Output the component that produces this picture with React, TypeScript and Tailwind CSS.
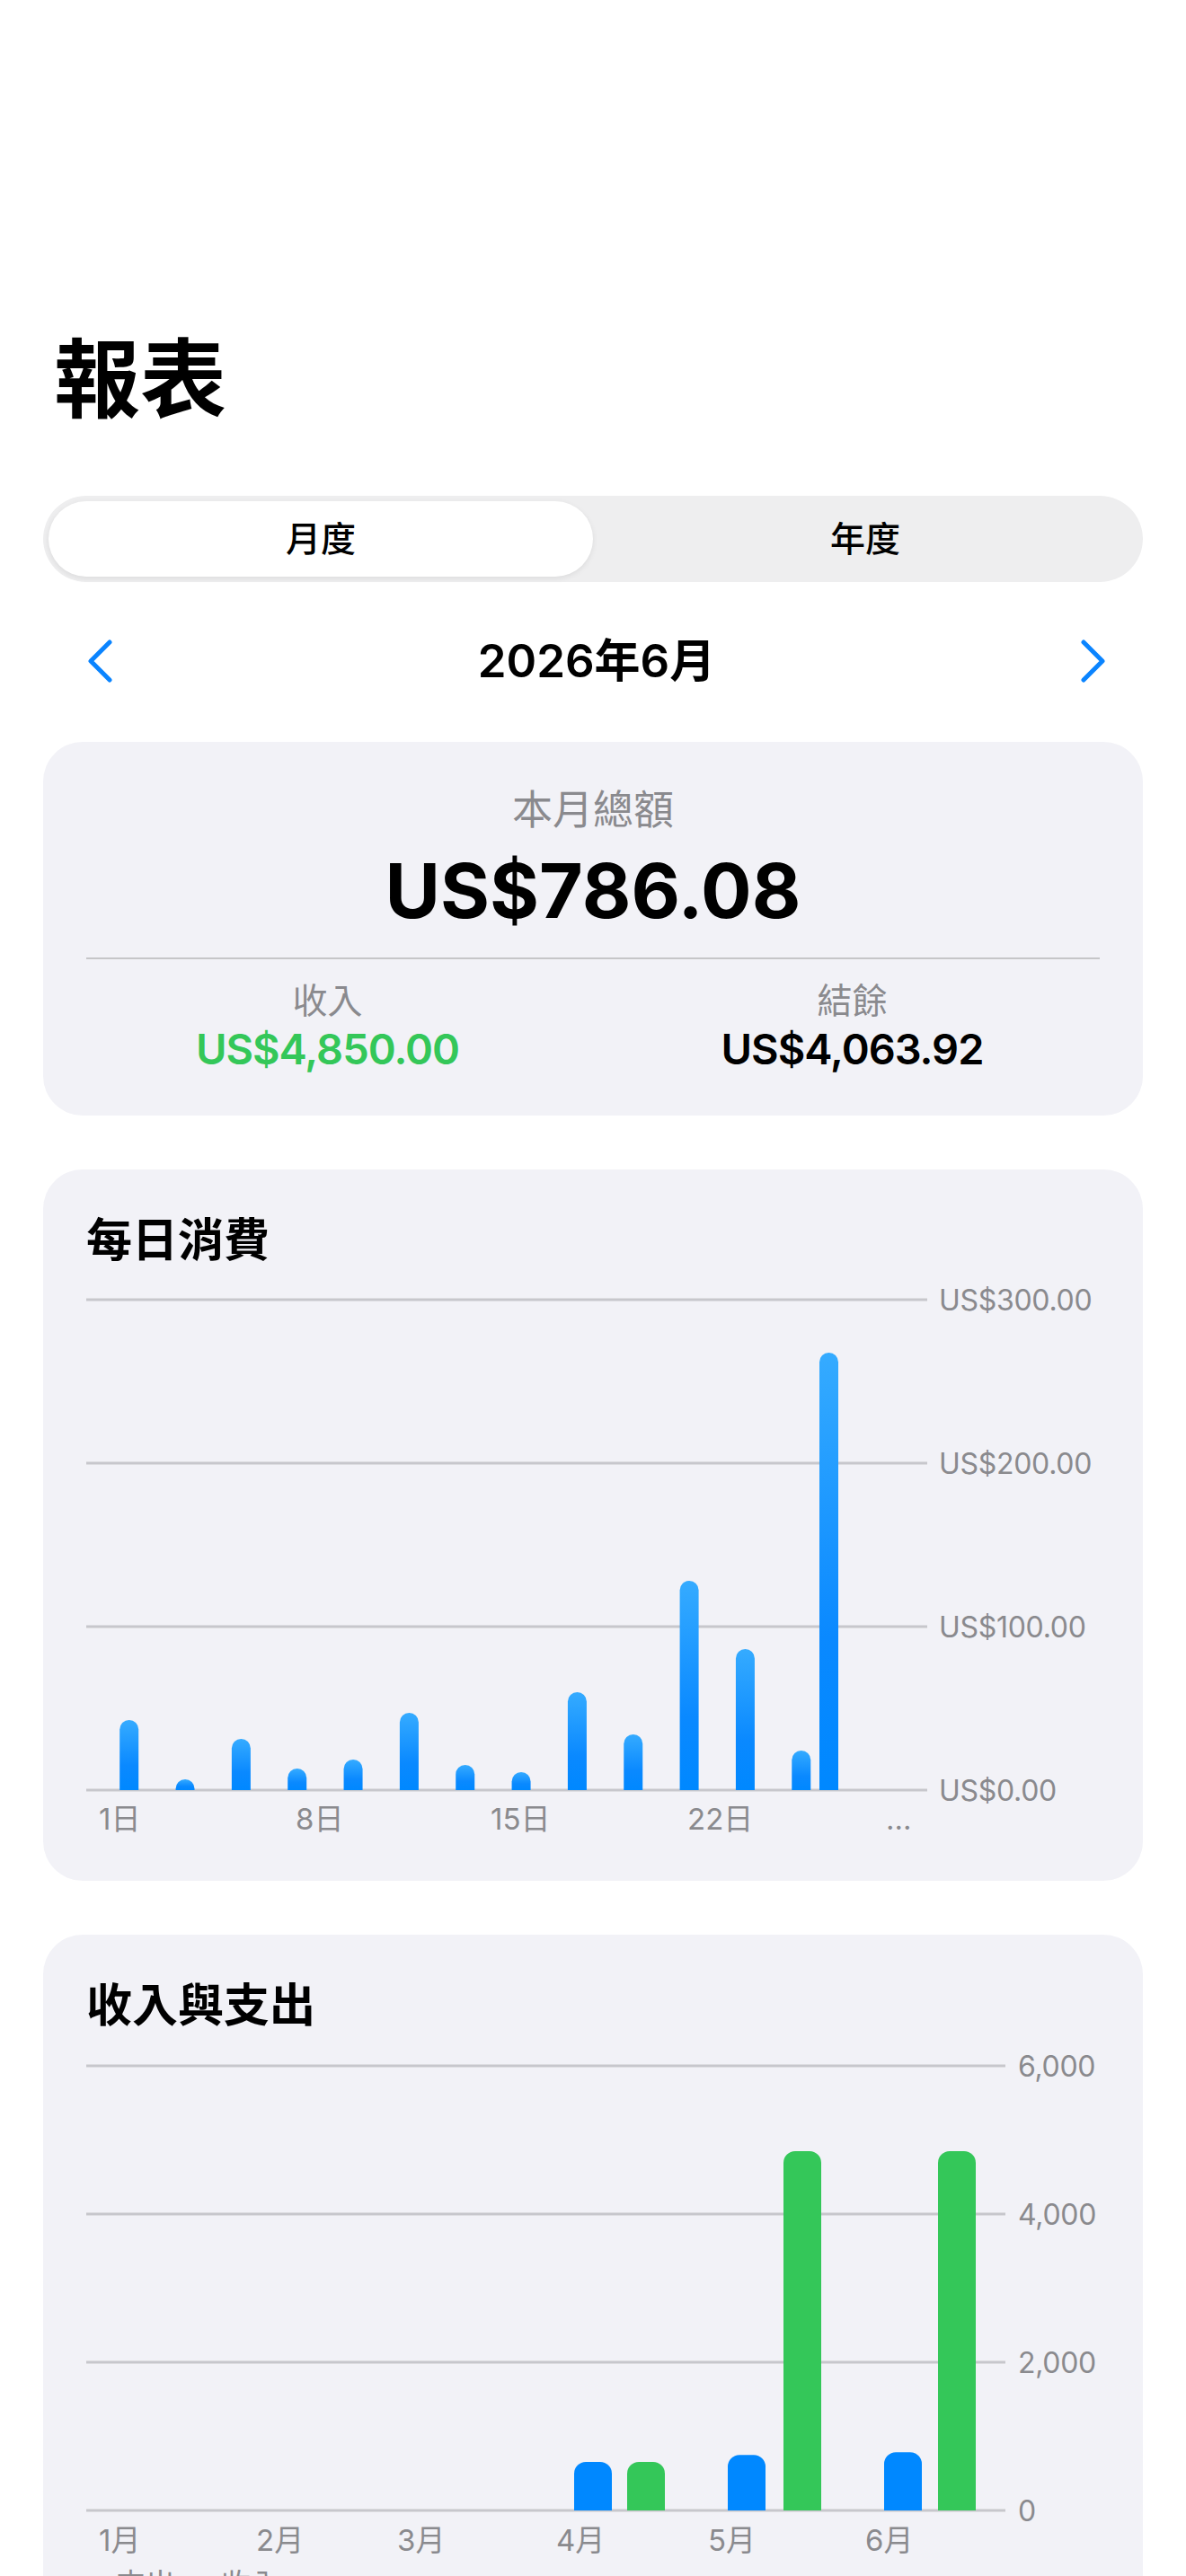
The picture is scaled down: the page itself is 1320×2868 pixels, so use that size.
import React from 'react';

const font = "font-['Inter','Noto_Sans_CJK_TC',sans-serif]";

// daily spend: bar centers (page x) and values in US$
const daily = [
  42.9, 6.6, 31.3, 13.2, 18.7, 47.3, 15.4, 11.0, 59.9, 34.1, 128.0, 86.3, 24.2,
].map((v, k) => ({ c: 143.7 + k * 62.34, v })).concat([{ c: 922.5, v: 267.6 }]);

// monthly income / expense, centers in page x
const monthly = [
  { c: 660, v: 655, color: '#0088ff' },
  { c: 719, v: 655, color: '#34c759' },
  { c: 831, v: 750, color: '#0088ff' },
  { c: 893, v: 4850, color: '#34c759' },
  { c: 1005, v: 786.08, color: '#0088ff' },
  { c: 1065, v: 4850, color: '#34c759' },
];

function topRounded(x: number, w: number, base: number, h: number, r: number) {
  const rr = Math.min(r, h, w / 2);
  const t = base - h;
  return `M${x},${base} V${t + rr} A${rr},${rr} 0 0 1 ${x + rr},${t} H${x + w - rr} A${rr},${rr} 0 0 1 ${x + w},${t + rr} V${base} Z`;
}

function Chevron({ dir }: { dir: 'left' | 'right' }) {
  return (
    <svg width="30" height="48" viewBox="0 0 30 48" fill="none">
      <path
        d={dir === 'left' ? 'M26 3 L5 24 L26 45' : 'M4 3 L25 24 L4 45'}
        stroke="#0a84ff"
        strokeWidth="5"
        strokeLinecap="round"
        strokeLinejoin="round"
      />
    </svg>
  );
}

function DailyChart() {
  const lines = [36, 218, 400, 582];
  const labels = ['US$300.00', 'US$200.00', 'US$100.00', 'US$0.00'];
  const base = 582;
  const perUnit = 1.82;
  const xs = [
    { x: 14, t: '1日' },
    { x: 233, t: '8日' },
    { x: 450, t: '15日' },
    { x: 669, t: '22日' },
    { x: 890, t: '…' },
  ];
  return (
    <svg width="1128" height="640" className="block overflow-visible">
      <defs>
        <linearGradient id="dg" x1="0" y1="0" x2="0" y2="1">
          <stop offset="0" stopColor="#35abff" />
          <stop offset="0.65" stopColor="#0a89ff" />
          <stop offset="1" stopColor="#0088ff" />
        </linearGradient>
      </defs>
      {lines.map((y, i) => (
        <g key={y}>
          <line x1="0" x2="936" y1={y} y2={y} stroke="#c7c7cc" strokeWidth="3" />
          <text x="949" y={y + 12} fontSize="32" letterSpacing="-0.3" fill="#8a8a8e">
            {labels[i]}
          </text>
        </g>
      ))}
      {daily.map((d, i) => (
        <path key={i} d={topRounded(d.c - 96 - 10.5, 21, base, d.v * perUnit, 10.5)} fill="url(#dg)" />
      ))}
      {xs.map((l) => (
        <text key={l.t} x={l.x} y="626" fontSize="33" fill="#8a8a8e">
          {l.t}
        </text>
      ))}
    </svg>
  );
}

function MonthlyChart() {
  const lines = [37, 202, 367, 532];
  const labels = ['6,000', '4,000', '2,000', '0'];
  const base = 532;
  const perUnit = 165 / 2000;
  const months = [
    { x: 14, t: '1月' },
    { x: 189, t: '2月' },
    { x: 346, t: '3月' },
    { x: 523, t: '4月' },
    { x: 692, t: '5月' },
    { x: 867, t: '6月' },
  ];
  return (
    <svg width="1128" height="594" className="block overflow-visible">
      {lines.map((y, i) => (
        <g key={y}>
          <line x1="0" x2="1023" y1={y} y2={y} stroke="#c7c7cc" strokeWidth="3" />
          <text x="1037" y={y + 12} fontSize="32" letterSpacing="-0.3" fill="#8a8a8e">
            {labels[i]}
          </text>
        </g>
      ))}
      {monthly.map((b, i) => (
        <path key={i} d={topRounded(b.c - 96 - 21, 42, base, b.v * perUnit, 13)} fill={b.color} />
      ))}
      {months.map((m) => (
        <text key={m.t} x={m.x} y="577" fontSize="33" fill="#8a8a8e">
          {m.t}
        </text>
      ))}
    </svg>
  );
}

export default function App() {
  return (
    <div className={`${font} min-h-[2868px] w-full bg-white text-black`}>
      {/* large title */}
      <h1 className="pt-[361px] px-[60px] text-[96px] leading-[122px] font-bold">報表</h1>

      {/* month / year segmented control */}
      <div className="mx-12 mt-[69px] h-[96px] rounded-full bg-[#eeeeef] p-[6px] flex">
        <div className="flex-1 rounded-full bg-white shadow-[0_2px_6px_rgba(0,0,0,0.08)] flex items-center justify-center text-[39px] font-medium">
          月度
        </div>
        <div className="flex-1 flex items-center justify-center text-[39px] font-medium">年度</div>
      </div>

      {/* period navigation */}
      <div className="mt-[58px] h-[60px] pl-[96px] pr-[88px] flex items-center justify-between">
        <Chevron dir="left" />
        <span className="text-[51px] leading-[60px] font-semibold">2026年6月</span>
        <Chevron dir="right" />
      </div>

      {/* summary card */}
      <div className="mx-12 mt-[60px] rounded-[44px] bg-[#f2f2f7] px-12 pt-[49px] pb-[44px]">
        <div className="text-center text-[45px] leading-[54px] text-[#8a8a8e]">本月總額</div>
        <div className="mt-[12px] text-center text-[84px] leading-[101px] font-bold">US$786.08</div>
        <div className="mt-[24px] h-[2px] bg-[#c6c6c8]" />
        <div className="mt-[22px] grid grid-cols-2 gap-x-[26px]">
          <div className="flex flex-col items-center -translate-x-[7px]">
            <span className="text-[39px] leading-[47px] text-[#8a8a8e]">收入</span>
            <span className="text-[47px] leading-[61px] tracking-[-1px] font-semibold text-[#34c759]">
              US$4,850.00
            </span>
          </div>
          <div className="flex flex-col items-center">
            <span className="text-[39px] leading-[47px] text-[#8a8a8e]">結餘</span>
            <span className="text-[47px] leading-[61px] tracking-[-1px] font-semibold">US$4,063.92</span>
          </div>
        </div>
      </div>

      {/* daily spending */}
      <div className="mx-12 mt-[60px] rounded-[44px] bg-[#f2f2f7] px-12 pt-12 pb-[43px]">
        <h2 className="text-[51px] leading-[61px] font-semibold">每日消費</h2>
        <DailyChart />
      </div>

      {/* income vs expense */}
      <div className="mx-12 mt-[60px] rounded-[44px] bg-[#f2f2f7] px-12 pt-12 pb-12">
        <h2 className="text-[51px] leading-[61px] font-semibold">收入與支出</h2>
        <MonthlyChart />
        <div className="flex items-center gap-[18px] text-[33px] leading-[40px] text-[#8a8a8e]">
          <span className="flex items-center gap-[20px]">
            <span className="w-[13px] h-[13px] rounded-full bg-[#0088ff]" />
            支出
          </span>
          <span className="flex items-center gap-[20px]">
            <span className="w-[13px] h-[13px] rounded-full bg-[#34c759]" />
            收入
          </span>
        </div>
      </div>
    </div>
  );
}
